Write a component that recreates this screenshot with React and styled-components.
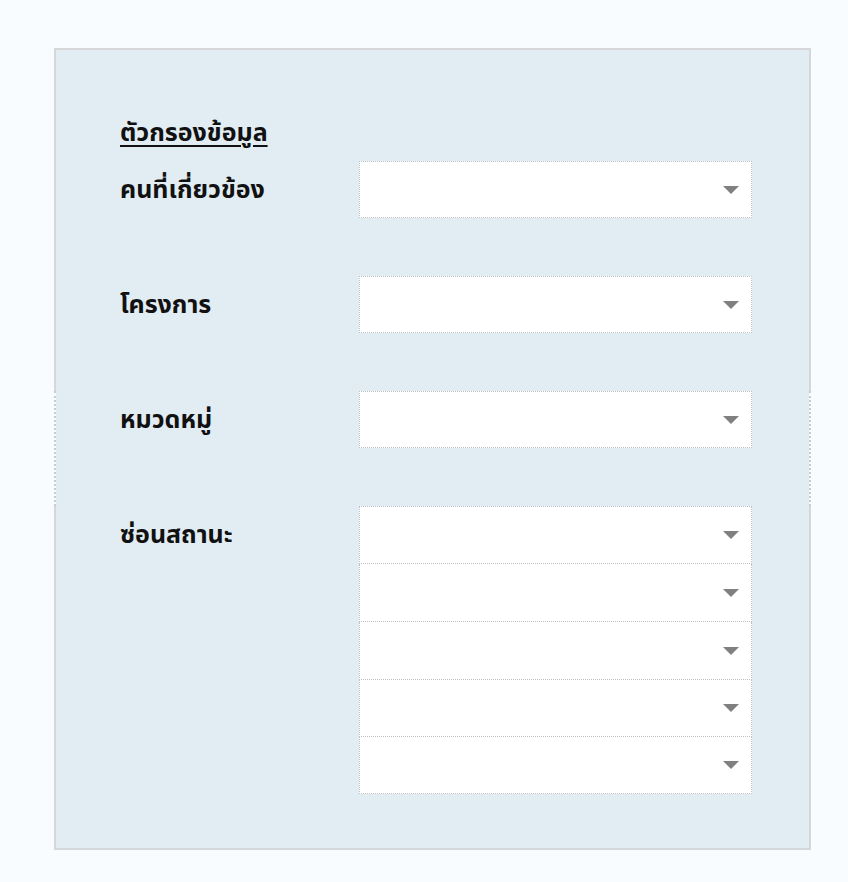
import React from "react";
import styled, { createGlobalStyle } from "styled-components";

const GlobalStyle = createGlobalStyle`
  html, body {
    margin: 0;
    background: #f8fcfe;
  }
  body {
    font-family: "Noto Sans", "Noto Sans Thai", "DejaVu Sans", sans-serif;
    color: #111;
  }
`;

const Page = styled.div`
  padding: 48px 0 32px 54px;
`;

const Panel = styled.section`
  width: 753px;
  border: 2px solid #d5d7d9;
  background: #e2ecf3;
  padding: 64px 0 54px;
`;

const Heading = styled.h2`
  margin: 0 0 13px;
  padding-left: 64px;
  font-size: 25px;
  line-height: 34px;
  font-weight: 700;
  text-decoration: underline;
  text-decoration-thickness: 2px;
  text-underline-offset: 4px;
`;

const Row = styled.div`
  display: grid;
  grid-template-columns: 239px 393px;
  padding: 0 57px ${(p) => (p.$last ? "0" : "58px")} 64px;
  ${(p) =>
    p.$marked &&
    `
    margin: 0 -2px;
    border-left: 2px dotted #c9cdd0;
    border-right: 2px dotted #c9cdd0;
    background: linear-gradient(#e2ecf3, #e2ecf3) padding-box, #f8fcfe border-box;
  `}
`;

const Label = styled.div`
  height: 57px;
  display: flex;
  align-items: center;
  font-size: 25px;
  font-weight: 700;
`;

const Stack = styled.div`
  display: flex;
  flex-direction: column;
`;

const Dropdown = styled.button`
  position: relative;
  display: block;
  width: 393px;
  height: ${(p) => (p.$tall ? "58px" : "57px")};
  padding: 0;
  border: 1px dotted #bfc2c5;
  background: #fff;
  cursor: pointer;

  & + & {
    border-top: none;
  }

  &::after {
    content: "";
    position: absolute;
    right: 12px;
    top: 50%;
    margin-top: -4px;
    border-left: 8px solid transparent;
    border-right: 8px solid transparent;
    border-top: 8px solid #808080;
  }
`;

const filters = [
  { label: "คนที่เกี่ยวข้อง", count: 1 },
  { label: "โครงการ", count: 1 },
  { label: "หมวดหมู่", count: 1, marked: true },
  { label: "ซ่อนสถานะ", count: 5 },
];

export default function App() {
  return (
    <Page>
      <GlobalStyle />
      <Panel>
        <Heading>ตัวกรองข้อมูล</Heading>
        {filters.map((f, i) => (
          <Row key={f.label} $marked={f.marked} $last={i === filters.length - 1}>
            <Label>{f.label}</Label>
            <Stack>
              {Array.from({ length: f.count }, (_, j) => (
                <Dropdown
                  key={j}
                  type="button"
                  aria-label={f.label}
                  $tall={f.count > 1 && j < 3}
                />
              ))}
            </Stack>
          </Row>
        ))}
      </Panel>
    </Page>
  );
}
